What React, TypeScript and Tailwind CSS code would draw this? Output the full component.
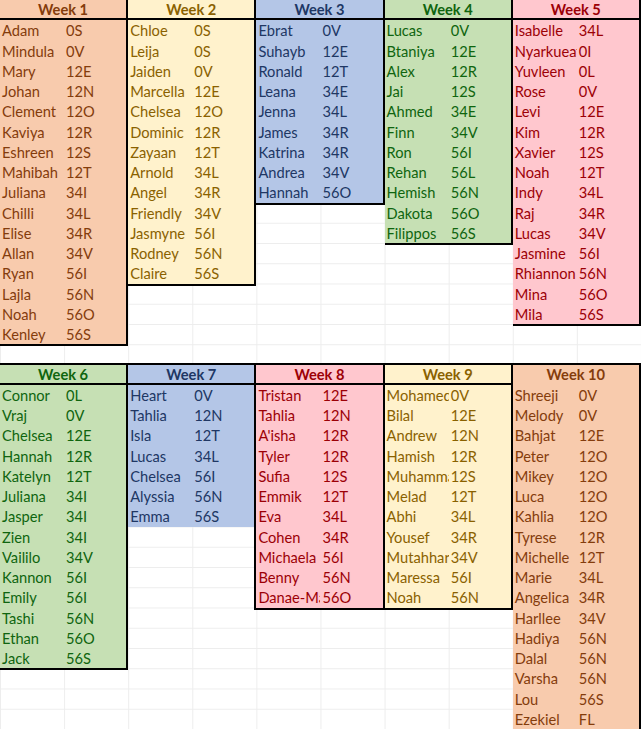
type Row = [string, string];

type Sheet = {
  title: string;
  rows: Row[];
  tone: string;
  noBottom?: boolean;
  noHeaderLine?: boolean;
  leftLine?: boolean;
  topLine?: boolean;
};

const peach = "bg-[#f8cbad] text-[#843c0c]";
const cream = "bg-[#fff2cc] text-[#8a6100]";
const blue = "bg-[#b4c6e7] text-[#203764]";
const green = "bg-[#c6e0b4] text-[#0f650f]";
const pink = "bg-[#ffc7ce] text-[#9c0006]";

const top: Sheet[] = [
  {
    title: "Week 1",
    tone: peach,
    rows: [
      ["Adam", "0S"], ["Mindula", "0V"], ["Mary", "12E"], ["Johan", "12N"],
      ["Clement", "12O"], ["Kaviya", "12R"], ["Eshreen", "12S"], ["Mahibah", "12T"],
      ["Juliana", "34I"], ["Chilli", "34L"], ["Elise", "34R"], ["Allan", "34V"],
      ["Ryan", "56I"], ["Lajla", "56N"], ["Noah", "56O"], ["Kenley", "56S"],
    ],
  },
  {
    title: "Week 2",
    tone: cream,
    rows: [
      ["Chloe", "0S"], ["Leija", "0S"], ["Jaiden", "0V"], ["Marcella", "12E"],
      ["Chelsea", "12O"], ["Dominic", "12R"], ["Zayaan", "12T"], ["Arnold", "34L"],
      ["Angel", "34R"], ["Friendly", "34V"], ["Jasmyne", "56I"], ["Rodney", "56N"],
      ["Claire", "56S"],
    ],
  },
  {
    title: "Week 3",
    tone: blue,
    rows: [
      ["Ebrat", "0V"], ["Suhayb", "12E"], ["Ronald", "12T"], ["Leana", "34E"],
      ["Jenna", "34L"], ["James", "34R"], ["Katrina", "34R"], ["Andrea", "34V"],
      ["Hannah", "56O"],
    ],
  },
  {
    title: "Week 4",
    tone: green,
    rows: [
      ["Lucas", "0V"], ["Btaniya", "12E"], ["Alex", "12R"], ["Jai", "12S"],
      ["Ahmed", "34E"], ["Finn", "34V"], ["Ron", "56I"], ["Rehan", "56L"],
      ["Hemish", "56N"], ["Dakota", "56O"], ["Filippos", "56S"],
    ],
  },
  {
    title: "Week 5",
    tone: pink,
    rows: [
      ["Isabelle", "34L"], ["Nyarkueath", "0I"], ["Yuvleen", "0L"], ["Rose", "0V"],
      ["Levi", "12E"], ["Kim", "12R"], ["Xavier", "12S"], ["Noah", "12T"],
      ["Indy", "34L"], ["Raj", "34R"], ["Lucas", "34V"], ["Jasmine", "56I"],
      ["Rhiannon", "56N"], ["Mina", "56O"], ["Mila", "56S"],
    ],
  },
];

const bottom: Sheet[] = [
  {
    title: "Week 6",
    tone: green,
    topLine: true,
    rows: [
      ["Connor", "0L"], ["Vraj", "0V"], ["Chelsea", "12E"], ["Hannah", "12R"],
      ["Katelyn", "12T"], ["Juliana", "34I"], ["Jasper", "34I"], ["Zien", "34I"],
      ["Vaililo", "34V"], ["Kannon", "56I"], ["Emily", "56I"], ["Tashi", "56N"],
      ["Ethan", "56O"], ["Jack", "56S"],
    ],
  },
  {
    title: "Week 7",
    tone: blue,
    topLine: true,
    noBottom: true,
    rows: [
      ["Heart", "0V"], ["Tahlia", "12N"], ["Isla", "12T"], ["Lucas", "34L"],
      ["Chelsea", "56I"], ["Alyssia", "56N"], ["Emma", "56S"],
    ],
  },
  {
    title: "Week 8",
    tone: pink,
    topLine: true,
    leftLine: true,
    rows: [
      ["Tristan", "12E"], ["Tahlia", "12N"], ["A'isha", "12R"], ["Tyler", "12R"],
      ["Sufia", "12S"], ["Emmik", "12T"], ["Eva", "34L"], ["Cohen", "34R"],
      ["Michaela", "56I"], ["Benny", "56N"], ["Danae-Mae", "56O"],
    ],
  },
  {
    title: "Week 9",
    tone: cream,
    topLine: true,
    rows: [
      ["Mohamed", "0V"], ["Bilal", "12E"], ["Andrew", "12N"], ["Hamish", "12R"],
      ["Muhammad", "12S"], ["Melad", "12T"], ["Abhi", "34L"], ["Yousef", "34R"],
      ["Mutahhar", "34V"], ["Maressa", "56I"], ["Noah", "56N"],
    ],
  },
  {
    title: "Week 10",
    tone: peach,
    topLine: true,
    noHeaderLine: true,
    rows: [
      ["Shreeji", "0V"], ["Melody", "0V"], ["Bahjat", "12E"], ["Peter", "12O"],
      ["Mikey", "12O"], ["Luca", "12O"], ["Kahlia", "12O"], ["Tyrese", "12R"],
      ["Michelle", "12T"], ["Marie", "34L"], ["Angelica", "34R"], ["Harllee", "34V"],
      ["Hadiya", "56N"], ["Dalal", "56N"], ["Varsha", "56N"], ["Lou", "56S"],
      ["Ezekiel", "FL"],
    ],
  },
];

function WeekTable({ sheet }: { sheet: Sheet }) {
  return (
    <div
      className={`shrink-0 border-r-2 border-black ${sheet.tone} ${
        sheet.noBottom ? "" : "border-b-2"
      } ${sheet.topLine ? "border-t-2" : ""} ${
        sheet.leftLine ? "border-l-2 -ml-[2px] w-[130.2px]" : "w-[128.2px]"
      }`}
    >
      <div
        className={`h-[20.25px] text-center font-bold leading-[19px] ${
          sheet.noHeaderLine ? "" : "border-b-2 border-black"
        }`}
      >
        {sheet.title}
      </div>
      {sheet.rows.map(([name, code], i) => (
        <div key={i} className="h-[20.25px] flex leading-[22px]">
          <div className="w-[64.1px] shrink-0 overflow-hidden whitespace-nowrap pl-[2px]">{name}</div>
          <div className="pl-[2px] whitespace-nowrap">{code}</div>
        </div>
      ))}
    </div>
  );
}

export default function App() {
  return (
    <div className="w-[641px] h-[729px] overflow-hidden bg-white bg-[linear-gradient(to_right,#ededed_1px,transparent_1px),linear-gradient(to_bottom,#ededed_1px,transparent_1px)] bg-[size:64.1px_20.25px] font-['Lato',sans-serif] text-[14.67px]">
      <div className="h-[344.25px] flex items-start">
        {top.map((s) => (
          <WeekTable key={s.title} sheet={s} />
        ))}
      </div>
      <div className="h-[18.25px]" />
      <div className="flex items-start">
        {bottom.map((s) => (
          <WeekTable key={s.title} sheet={s} />
        ))}
      </div>
    </div>
  );
}
